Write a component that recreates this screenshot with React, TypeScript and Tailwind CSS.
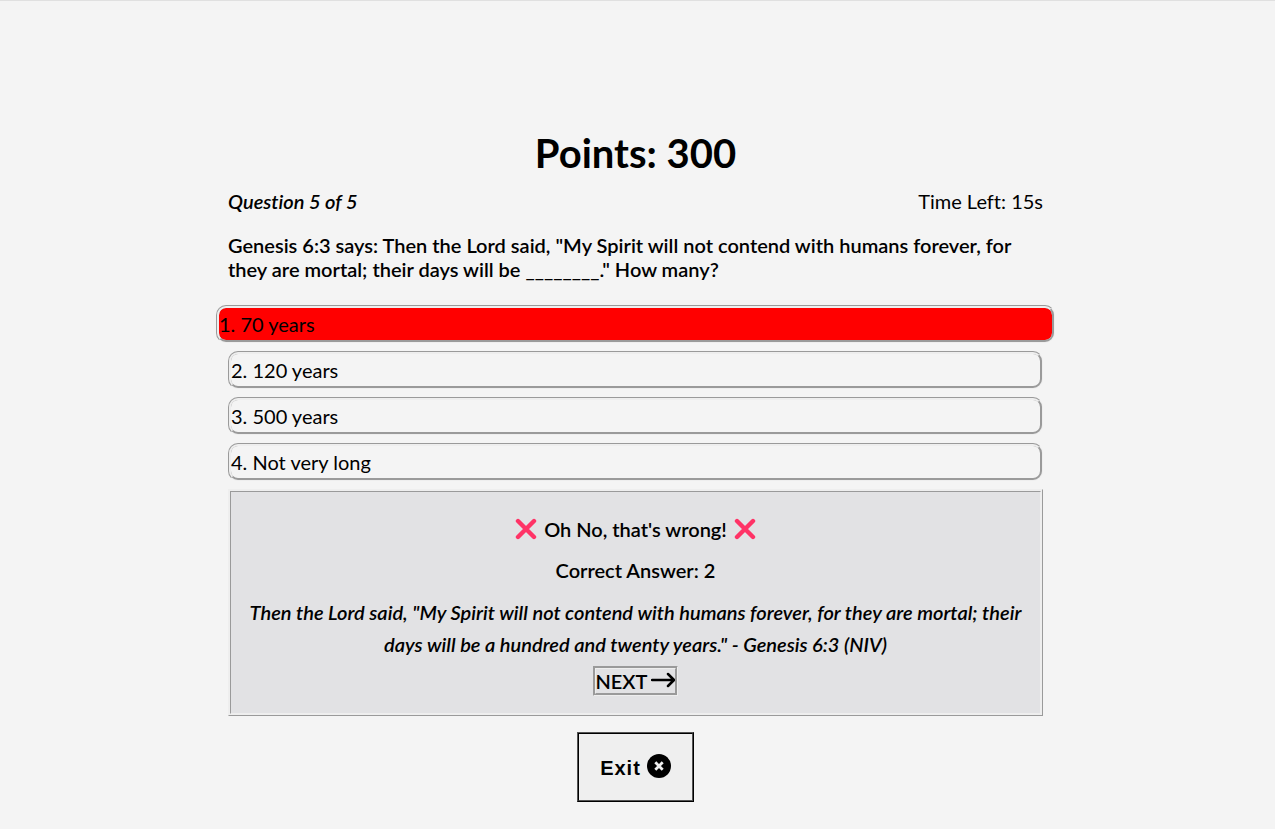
const answers = ["70 years", "120 years", "500 years", "Not very long"];
const chosen = 0;

function Cross() {
  return (
    <svg viewBox="0 0 22 22" className="size-[22px]" role="img" aria-label="Wrong">
      <path d="M3 3L19 19M19 3L3 19" stroke="#ff3366" strokeWidth="4.4" strokeLinecap="round" />
    </svg>
  );
}

export default function App() {
  return (
    <main className="flex min-h-screen flex-col items-center border-t border-[#e0e0e0] bg-[#f4f4f4] pt-32 pr-1 pb-7 font-['Lato','Liberation_Sans',sans-serif] text-xl text-black [font-variant-ligatures:none]">
      <div className="flex w-full max-w-[815px] flex-col">
        <h1 className="text-center text-[40px] leading-[48px] font-bold">Points: 300</h1>
        <div className="mt-3 flex justify-between leading-6">
          <p className="font-semibold italic">Question 5 of 5</p>
          <p>Time Left: 15s</p>
        </div>
        <h2 className="mt-5 leading-6 font-semibold">
          Genesis 6:3 says: Then the Lord said, "My Spirit will not contend with humans forever, for they are mortal; their days will be ________." How many?
        </h2>
        <ol className="mt-6 flex flex-col gap-2">
          {answers.map((answer, i) => (
            <li key={answer} className={i === chosen ? "-mx-3 flex" : "flex"}>
              <button
                type="button"
                className={
                  i === chosen
                    ? "w-full rounded-[10px] border-3 border-[#eeeeee] bg-[#ff0000] text-left leading-8 [border-style:groove]"
                    : "w-full rounded-[10px] border-3 border-[#eeeeee] text-left leading-8 [border-style:groove]"
                }
              >
                {i + 1}. {answer}
              </button>
            </li>
          ))}
        </ol>
        <section className="mt-2 flex flex-col items-center border-3 border-[#eeeeee] bg-[#e2e2e4] px-3 pt-[21px] pb-[17px] text-center font-semibold [border-style:ridge]">
          <p className="flex items-center gap-[7px] leading-8">
            <Cross />
            Oh No, that's wrong!
            <Cross />
          </p>
          <p className="mt-[9px] leading-8">Correct Answer: 2</p>
          <p className="mt-[10px] leading-8 italic">
            Then the Lord said, "My Spirit will not contend with humans forever, for they are mortal; their days will be a hundred and twenty years." - Genesis 6:3 (NIV)
          </p>
          <button type="button" className="mt-[6px] flex items-center gap-1 border-3 border-[#eeeeee] leading-6 [border-style:groove]">
            NEXT
            <svg viewBox="0 0 24 24" className="h-6 w-6" fill="none" stroke="black" strokeWidth="2.5" strokeLinecap="round" strokeLinejoin="round" aria-hidden="true">
              <path d="M1 11H23M17 5L23 11L17 17" />
            </svg>
          </button>
        </section>
      </div>
      <button type="button" className="mt-4 flex items-center gap-[6px] border-2 border-black bg-[#efefef] px-[21px] pt-5 pb-[18px] font-['Liberation_Sans',sans-serif] leading-7 font-bold tracking-wider [border-style:ridge]">
        Exit
        <svg viewBox="0 0 24 24" className="mb-1 size-6" aria-hidden="true">
          <circle cx="12" cy="12" r="12" />
          <path d="M8.3 8.3L15.7 15.7M15.7 8.3L8.3 15.7" stroke="#efefef" strokeWidth="2.8" />
        </svg>
      </button>
    </main>
  );
}
